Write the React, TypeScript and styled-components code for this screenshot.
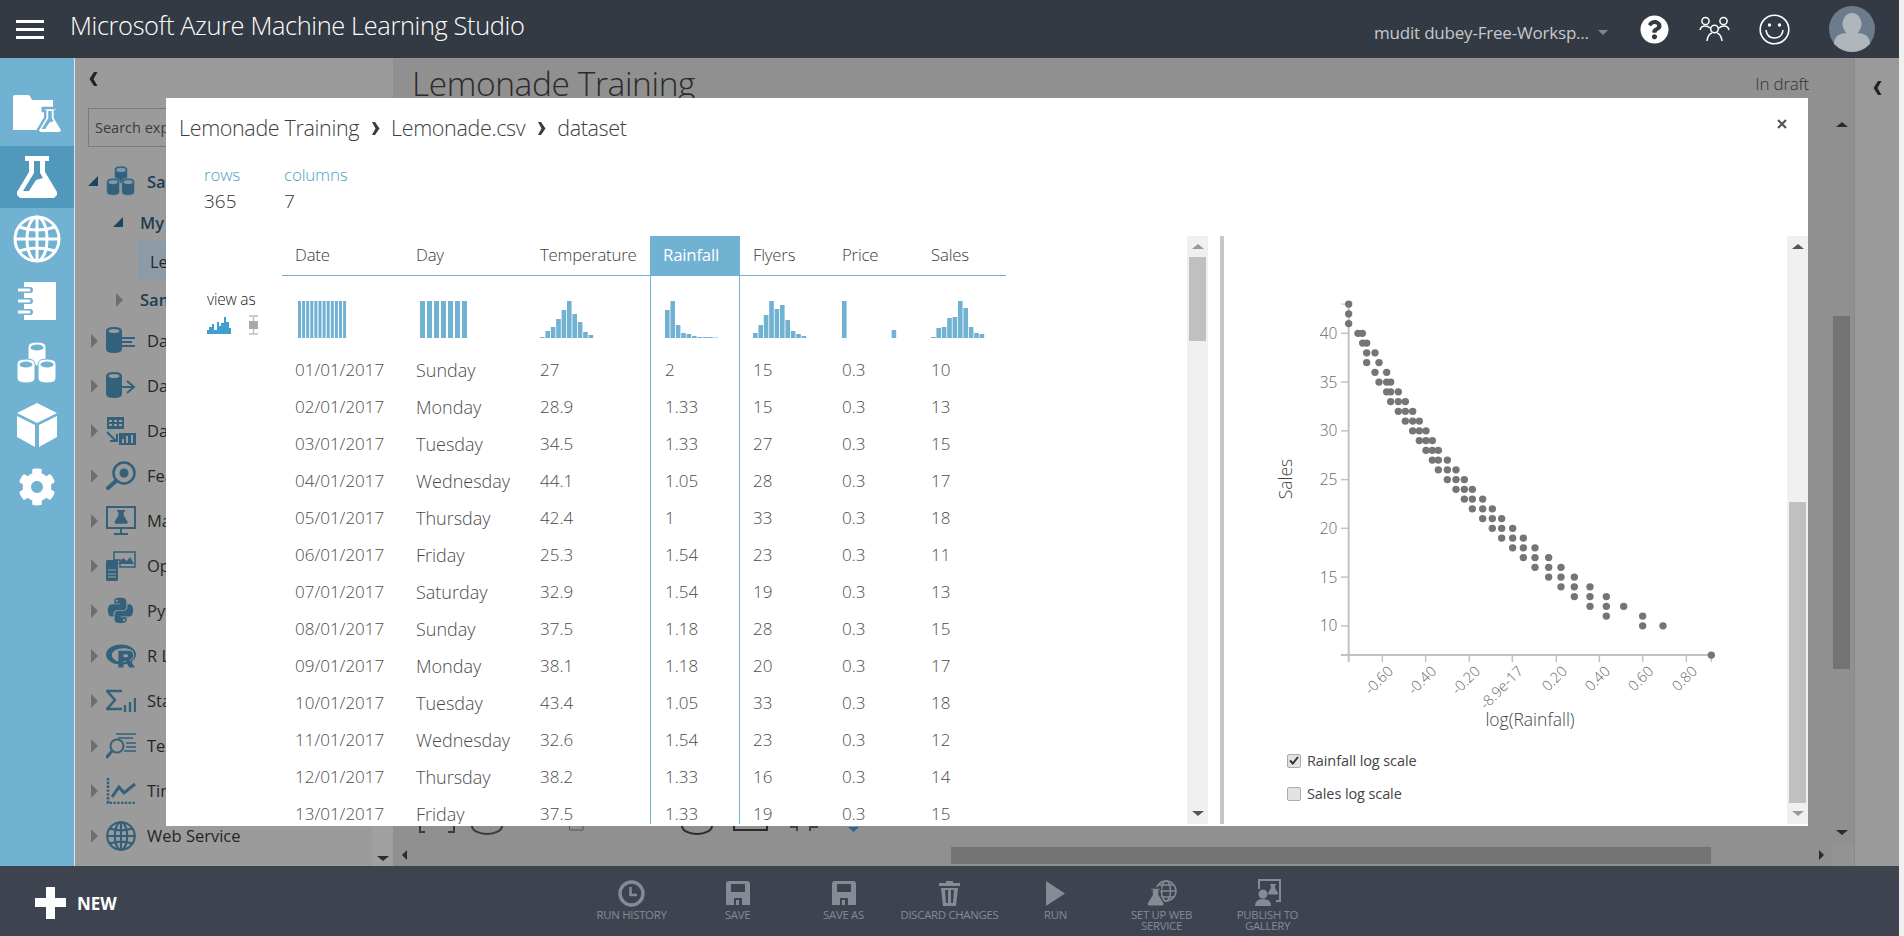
import React from 'react'
import styled, { createGlobalStyle } from 'styled-components'
import { FaCog, FaPython, FaRProject, FaQuestionCircle } from 'react-icons/fa'

// ******************** //
// COLOURS
// ******************** //

const BLUE = '#71b1d2'
const BLUE_DARK = '#5099bd'
const TEAL = '#33607a'
const BAR_TOP = '#343a43'
const BAR_BOTTOM = '#3d4450'
const ACTION = '#848b94'
const TEXT = '#4a4a4a'
const AXIS = '#c2c2c2'
const FONT = '"Open Sans", "Liberation Sans", sans-serif'

const GlobalStyle = createGlobalStyle`
  html, body {
    margin: 0;
    padding: 0;
    overflow: hidden;
    background: #f0f0f0;
  }
  * {
    box-sizing: border-box;
  }
`

// ******************** //
// PAGE FRAME
// ******************** //

const Root = styled.div`
  position: relative;
  width: 1899px;
  height: 936px;
  display: flex;
  flex-direction: column;
  font-family: ${FONT};
`

const TopBar = styled.header`
  height: 58px;
  flex: none;
  display: flex;
  align-items: center;
  background: ${BAR_TOP};
  color: #fff;
`

const Hamburger = styled.div`
  width: 28px;
  margin-left: 16px;
  display: flex;
  flex-direction: column;
  gap: 5px;

  span {
    display: block;
    height: 3px;
    background: #fff;
  }
`

const BrandTitle = styled.div`
  margin-left: 26px;
  font-size: 25.4px;
  font-weight: 300;
  letter-spacing: -0.37px;
  position: relative;
  top: -4px;
`

const TopRight = styled.div`
  margin-left: auto;
  display: flex;
  align-items: center;
`

const Workspace = styled.div`
  width: 250px;
  display: flex;
  align-items: center;
  color: #c6c8cb;
  font-size: 17px;
  letter-spacing: -0.2px;
  white-space: nowrap;
  position: relative;
  top: 3px;
`

const Caret = styled.span`
  margin-left: 9px;
  border-top: 5px solid #80858c;
  border-left: 5px solid transparent;
  border-right: 5px solid transparent;
`

const TopIcon = styled.div<{ $w: number }>`
  width: ${p => p.$w}px;
  display: flex;
  justify-content: center;
`

const Middle = styled.div`
  flex: 1;
  min-height: 0;
  display: flex;
`

// ******************** //
// LEFT RAIL
// ******************** //

const Rail = styled.nav`
  width: 75px;
  flex: none;
  padding-top: 26px;
  background: ${BLUE};
  border-right: 1px solid #d5e6ef;
`

const RailItem = styled.div<{ $active?: boolean }>`
  height: 62px;
  display: flex;
  align-items: center;
  justify-content: center;
  background: ${p => (p.$active ? BLUE_DARK : 'transparent')};
`

// ******************** //
// EXPERIMENT SIDEBAR
// ******************** //

const Sidebar = styled.aside`
  position: relative;
  width: 318px;
  flex: none;
  background: #9b9b9b;
  color: #262626;
`

const Collapse = styled.div`
  height: 42px;
  padding-left: 14px;
  display: flex;
  align-items: center;
`

const Chevron = styled.span`
  color: #222;
  font-size: 14px;
  font-weight: 700;
  display: inline-flex;
`

const SearchBox = styled.input`
  display: block;
  width: 290px;
  height: 39px;
  margin: 8px 0 12px 13px;
  padding: 0 6px;
  background: transparent;
  border: 1px solid #7c7c7c;
  font-family: ${FONT};
  font-size: 14.5px;

  &::placeholder {
    color: #3b3b3b;
    opacity: 1;
  }
`

const TreeRow = styled.div<{ $h: number; $indent?: number; $selected?: boolean }>`
  height: ${p => p.$h}px;
  margin-left: ${p => p.$indent || 0}px;
  display: flex;
  align-items: center;
  background: ${p => (p.$selected ? '#8c9ba6' : 'transparent')};
  white-space: nowrap;
`

const ArrowSlot = styled.span`
  width: 31px;
  padding-left: 13px;
  flex: none;
  display: flex;
`

const SubArrowSlot = styled(ArrowSlot)`
  width: 27px;
  padding-left: 0;
`

const TreeArrow = styled.span<{ $open?: boolean }>`
  width: 0;
  height: 0;
  ${p =>
    p.$open
      ? `border-bottom: 10px solid #1c4660; border-left: 10px solid transparent;`
      : `margin-left: 3px; border-left: 7px solid #6e6e6e; border-top: 7px solid transparent; border-bottom: 7px solid transparent;`}
`

const TreeIcon = styled.span`
  width: 41px;
  flex: none;
  display: flex;
`

const TreeLabel = styled.span<{ $bold?: boolean }>`
  font-size: 16.5px;
  font-weight: ${p => (p.$bold ? 600 : 400)};
  color: ${p => (p.$bold ? '#1b3d55' : '#262626')};
`

const SelectedLabel = styled(TreeLabel)`
  padding-left: 12px;
`

const SideScrollCorner = styled.div`
  position: absolute;
  right: 0;
  bottom: 0;
  width: 21px;
  height: 40px;
  padding-top: 30px;
  background: #a0a0a0;
  display: flex;
  justify-content: center;
`

const ArrowDown = styled.span<{ $color: string }>`
  display: block;
  width: 0;
  height: 0;
  border-top: 5px solid ${p => p.$color};
  border-left: 6px solid transparent;
  border-right: 6px solid transparent;
`

const ArrowUp = styled.span<{ $color: string }>`
  display: block;
  width: 0;
  height: 0;
  border-bottom: 5px solid ${p => p.$color};
  border-left: 6px solid transparent;
  border-right: 6px solid transparent;
`

// ******************** //
// CANVAS BEHIND THE DIALOG
// ******************** //

const Canvas = styled.main`
  position: relative;
  flex: 1;
  min-width: 0;
  background: #909090;
`

const CanvasHead = styled.div`
  height: 50px;
  padding: 0 45px 0 19px;
  display: flex;
  align-items: center;
  justify-content: space-between;
`

const ExperimentTitle = styled.div`
  font-size: 33.5px;
  font-weight: 300;
  letter-spacing: -0.4px;
  color: #2b2b2b;
`

const Draft = styled.div`
  font-size: 17px;
  font-weight: 300;
  letter-spacing: -0.2px;
  color: #333;
`

const Scraps = styled.svg`
  position: absolute;
  left: 20px;
  top: 768px;
`

const ThumbV = styled.div`
  position: absolute;
  left: 1440px;
  top: 258px;
  width: 17px;
  height: 353px;
  background: #737373;
`

const ThumbH = styled.div`
  position: absolute;
  left: 558px;
  top: 789px;
  width: 760px;
  height: 17px;
  background: #737373;
`

const CanvasArrowUp = styled.div`
  position: absolute;
  left: 1443px;
  top: 64px;
`

const CanvasArrowDown = styled.div`
  position: absolute;
  left: 1443px;
  top: 772px;
`

const CanvasArrowLeft = styled.span`
  position: absolute;
  left: 9px;
  top: 792px;
  border-right: 5px solid #2b2b2b;
  border-top: 5px solid transparent;
  border-bottom: 5px solid transparent;
`

const CanvasArrowRight = styled.span`
  position: absolute;
  left: 1426px;
  top: 792px;
  border-left: 5px solid #2b2b2b;
  border-top: 5px solid transparent;
  border-bottom: 5px solid transparent;
`

const CornerTile = styled.div`
  position: absolute;
  right: 0;
  bottom: 0;
  width: 22px;
  height: 21px;
  background: #939393;
`

const RightPanel = styled.div`
  width: 45px;
  flex: none;
  padding-top: 23px;
  background: #9a9a9a;
  border-left: 1px solid #8a8a8a;
  display: flex;
  justify-content: center;
  align-items: flex-start;
`

// ******************** //
// BOTTOM COMMAND BAR
// ******************** //

const BottomBar = styled.footer`
  position: relative;
  height: 70px;
  flex: none;
  background: ${BAR_BOTTOM};
  display: flex;
  justify-content: center;
`

const NewButton = styled.div`
  position: absolute;
  left: 35px;
  top: 21px;
  display: flex;
  align-items: center;
  gap: 11px;
  color: #fff;
  font-size: 17px;
  font-weight: 700;
`

const Action = styled.div`
  width: 106px;
  padding-top: 14px;
  display: flex;
  flex-direction: column;
  align-items: center;
`

const ActionIcon = styled.div`
  height: 26px;
  display: flex;
  align-items: center;
  justify-content: center;
`

const ActionLabel = styled.div`
  margin-top: 3px;
  color: ${ACTION};
  font-size: 11.4px;
  line-height: 11px;
  letter-spacing: -0.3px;
  text-align: center;
  white-space: pre-line;
`

// ******************** //
// DATASET DIALOG
// ******************** //

const Dialog = styled.section`
  position: absolute;
  left: 166px;
  top: 98px;
  width: 1642px;
  height: 728px;
  background: #fff;
  display: flex;
  flex-direction: column;
  overflow: hidden;
  color: ${TEXT};
`

const DialogHead = styled.div`
  position: relative;
  height: 138px;
  flex: none;
`

const Crumbs = styled.div`
  padding: 15px 0 0 13px;
  display: flex;
  align-items: center;
  gap: 11.5px;
  font-size: 21.5px;
  line-height: 30px;
  font-weight: 300;
  letter-spacing: -0.35px;
  color: #3e3e3e;
`

const CrumbSep = styled.span`
  display: inline-flex;
`

const CloseX = styled.div`
  position: absolute;
  right: 21px;
  top: 21px;
  display: flex;
`

const Stats = styled.div`
  margin-top: 20px;
  padding-left: 38px;
  display: flex;
`

const Stat = styled.div`
  width: 80px;
`

const StatLabel = styled.div`
  color: #4e9fc8;
  font-size: 17px;
  font-weight: 300;
  line-height: 24px;
  letter-spacing: -0.2px;
`

const StatValue = styled.div`
  color: #333;
  font-size: 19px;
  font-weight: 300;
  line-height: 28px;
`

const DialogBody = styled.div`
  flex: none;
  height: 588px;
  display: flex;
  overflow: hidden;
`

const ViewAs = styled.div`
  width: 116px;
  flex: none;
  padding: 53px 0 0 41px;
`

const ViewAsLabel = styled.div`
  font-size: 15.5px;
  line-height: 20px;
  letter-spacing: -0.2px;
  color: #222;
  font-weight: 300;
  white-space: nowrap;
`

const ViewAsIcons = styled.div`
  margin-top: 6px;
  width: 52px;
  display: flex;
  align-items: center;
  justify-content: space-between;
`

const DataTable = styled.div`
  width: 724px;
  flex: none;
  display: grid;
  grid-template-columns: 121px 124px 123px 90px 89px 89px 88px;
  grid-auto-rows: 37px;
  grid-template-rows: 40px 75px;
  font-size: 17px;
  font-weight: 300;
`

const HeadCell = styled.div<{ $active?: boolean }>`
  padding: 0 0 3px 13px;
  display: flex;
  align-items: center;
  font-weight: ${p => (p.$active ? 400 : 300)};
  font-size: 16.8px;
  letter-spacing: -0.2px;
  color: ${p => (p.$active ? '#fff' : '#3c3c3c')};
  background: ${p => (p.$active ? BLUE : 'transparent')};
  border-bottom: 1px solid ${BLUE};
`

const Cell = styled.div<{ $active?: boolean }>`
  display: flex;
  align-items: center;
  white-space: nowrap;
  padding-left: ${p => (p.$active ? 14 : 13)}px;
  ${p =>
    p.$active
      ? `border-left: 1px solid ${BLUE}; border-right: 1px solid ${BLUE};`
      : ''}
`

const HistCell = styled(Cell)`
  align-items: flex-start;
  padding-top: 25px;
`

const DayCell = styled(Cell)`
  font-size: 18px;
`

const ScrollTrack = styled.div<{ $left: number }>`
  width: 21px;
  flex: none;
  height: 588px;
  margin-left: ${p => p.$left}px;
  background: #f0f0f0;
  display: flex;
  flex-direction: column;
  align-items: center;
  padding: 0 2px;
`

const ScrollBtn = styled.div`
  height: 21px;
  flex: none;
  display: flex;
  align-items: center;
  justify-content: center;
`

const ScrollThumb = styled.div<{ $h: number }>`
  width: 17px;
  height: ${p => p.$h}px;
  flex: none;
  background: #c0c0c0;
`

const ScrollGap = styled.div`
  flex: 1;
`

const Divider = styled.div`
  width: 4px;
  height: 588px;
  flex: none;
  margin-left: 12px;
  background: #c6c6c6;
`

const ChartPanel = styled.div`
  width: 563px;
  flex: none;
`

const ChartSvg = styled.svg`
  display: block;
`

const ScaleOption = styled.label`
  height: 33px;
  padding-left: 63px;
  display: flex;
  align-items: center;
  gap: 6px;
  font-size: 14.5px;
  letter-spacing: -0.1px;
  color: #444;
`

const Tick = styled.span`
  width: 14px;
  height: 14px;
  flex: none;
  background: #e3e3e3;
  border: 1px solid #ababab;
  border-radius: 2px;
  display: flex;
  align-items: center;
  justify-content: center;
`

// ******************** //
// ICONS
// ******************** //

const FLASK = 'M8 0H32V5H28V16L40 36V39L37 42H3L0 39V36L12 16V5H8Z'

const FlaskIcon = ({ size = 42, fill = '#fff', cut = BLUE_DARK }: { size?: number; fill?: string; cut?: string }) => (
  <svg width={(size * 40) / 42} height={size} viewBox="0 0 40 42">
    <path d={FLASK} fill={fill} />
    <path d="M17 5H23V17L26 22L19 24L12 35H6L17 17Z" fill={cut} />
  </svg>
)

const FolderFlask = () => (
  <svg width="50" height="42" viewBox="0 0 50 42">
    <path d="M1 3Q1 1 3 1H16Q18 1 19 4L20 6H41V36H1Z" fill="#fff" />
    <g transform="translate(26 14) scale(0.6)">
      <path d={FLASK} fill="#fff" stroke={BLUE} strokeWidth="4" />
      <path d="M17 5H23V17L26 22L19 24L12 35H6L17 17Z" fill={BLUE} />
    </g>
  </svg>
)

const Globe = ({ size = 48, color = '#fff', w = 3 }: { size?: number; color?: string; w?: number }) => (
  <svg width={size} height={size} viewBox="0 0 48 48" fill="none" stroke={color} strokeWidth={w}>
    <circle cx="24" cy="24" r="22" />
    <ellipse cx="24" cy="24" rx="10" ry="22" />
    <path d="M24 2V46M2 24H46M6 12Q24 18 42 12M6 36Q24 30 42 36" />
  </svg>
)

const Notebook = () => (
  <svg width="38" height="38" viewBox="0 0 38 38">
    <rect x="6" y="0" width="32" height="38" fill="#fff" />
    <g stroke={BLUE} strokeWidth="6" strokeLinecap="round">
      <path d="M0 8H12M0 19H12M0 30H12" />
    </g>
    <g stroke="#fff" strokeWidth="3" strokeLinecap="round">
      <path d="M1 8H11M1 19H11M1 30H11" />
    </g>
  </svg>
)

const Can = ({ x, y, fill, top }: { x: number; y: number; fill: string; top: string }) => (
  <g transform={`translate(${x} ${y})`}>
    <path d="M0 5Q0 0 9 0T18 5V19Q18 24 9 24T0 19Z" fill={fill} stroke={top} strokeWidth="1" />
    <ellipse cx="9" cy="5.5" rx="6.5" ry="3" fill={top} />
  </g>
)

const Cans = ({ size = 42, fill = '#fff', top = BLUE }: { size?: number; fill?: string; top?: string }) => (
  <svg width={size} height={size} viewBox="0 0 42 42">
    <Can x={12} y={0} fill={fill} top={top} />
    <Can x={1} y={17} fill={fill} top={top} />
    <Can x={22} y={17} fill={fill} top={top} />
  </svg>
)

const Cube = () => (
  <svg width="40" height="44" viewBox="0 0 40 44" fill="#fff">
    <path d="M20 0L40 10L20 20L0 10Z" />
    <path d="M0 13L18 22V44L0 34Z" />
    <path d="M40 13L22 22V44L40 34Z" />
  </svg>
)

const TealCan = () => (
  <path d="M0 4Q0 0 8 0T16 4V22Q16 26 8 26T0 22Z" fill={TEAL} />
)

const IconFormat = () => (
  <svg width="30" height="28" viewBox="0 0 30 28">
    <TealCan />
    <ellipse cx="8" cy="4" rx="5.5" ry="2" fill="#9b9b9b" />
    <path d="M14 11H29M14 15H26M14 19H29" stroke={TEAL} strokeWidth="2" />
  </svg>
)

const IconInOut = () => (
  <svg width="30" height="28" viewBox="0 0 30 28">
    <TealCan />
    <ellipse cx="8" cy="4" rx="5.5" ry="2" fill="#9b9b9b" />
    <path d="M13 15H27M21 9L28 15L21 21" stroke={TEAL} strokeWidth="2" fill="none" />
  </svg>
)

const IconTransform = () => (
  <svg width="30" height="28" viewBox="0 0 30 28">
    <path d="M1 0H18V12H1Z" fill={TEAL} />
    <path d="M3 3H6V5H3ZM8 3H11V5H8ZM13 3H16V5H13ZM3 7H6V9H3ZM8 7H11V9H8ZM13 7H16V9H13Z" fill="#9b9b9b" />
    <path d="M1 15L10 24M4 24H11V17" stroke={TEAL} strokeWidth="2" fill="none" />
    <path d="M13 16H30V28H13Z" fill={TEAL} />
    <path d="M16 22H18V26H16ZM20 19H22V26H20ZM25 18H27V26H25Z" fill="#9b9b9b" />
  </svg>
)

const IconFeature = () => (
  <svg width="30" height="30" viewBox="0 0 30 30" fill="none">
    <circle cx="18" cy="12" r="10.5" stroke={TEAL} strokeWidth="2.5" />
    <circle cx="18" cy="12" r="4.5" fill={TEAL} />
    <path d="M10 20L2 27" stroke={TEAL} strokeWidth="4" strokeLinecap="round" />
  </svg>
)

const IconMachine = () => (
  <svg width="30" height="30" viewBox="0 0 30 30" fill="none">
    <rect x="1" y="1" width="28" height="21" stroke={TEAL} strokeWidth="2" />
    <path d="M15 22V27M8 28H22" stroke={TEAL} strokeWidth="2" />
    <g transform="translate(8.5 4) scale(0.33)">
      <path d={FLASK} fill={TEAL} />
    </g>
  </svg>
)

const IconOpen = () => (
  <svg width="30" height="30" viewBox="0 0 30 30">
    <path d="M8 1H29V16H14V9H8Z" fill="none" stroke={TEAL} strokeWidth="1.5" />
    <path d="M12 13L17 7L21 10L24 6L28 13Z" fill={TEAL} />
    <rect x="0" y="9" width="12" height="21" rx="1.5" fill={TEAL} />
    <path d="M2 19H10M2 23H10M2 26H10" stroke="#9b9b9b" strokeWidth="1.2" />
  </svg>
)

const IconStats = () => (
  <svg width="30" height="24" viewBox="0 0 30 24" fill="none" stroke={TEAL}>
    <path d="M16 2H1L9 11L1 20H16" strokeWidth="2.4" />
    <path d="M19 23V16M24 23V13M29 23V9" strokeWidth="2.4" />
  </svg>
)

const IconText = () => (
  <svg width="30" height="26" viewBox="0 0 30 26" fill="none" stroke={TEAL}>
    <circle cx="11" cy="13" r="6.5" strokeWidth="2" />
    <path d="M6 18L1 24" strokeWidth="3" strokeLinecap="round" />
    <path d="M10 1H30M12 5H27M20 10H30M20 14H30M18 18H30" strokeWidth="1.6" />
  </svg>
)

const IconTime = () => (
  <svg width="30" height="26" viewBox="0 0 30 26" fill="none" stroke={TEAL}>
    <path d="M2 0V25H30" strokeWidth="2.6" strokeDasharray="2.4 1.4" />
    <path d="M6 19L13 9L18 15L29 6" strokeWidth="3" />
  </svg>
)

const Floppy = () => (
  <svg width="24" height="24" viewBox="0 0 24 24">
    <path
      fillRule="evenodd"
      d="M3 0H21Q24 0 24 3V24H16V17H8V24H0V3Q0 0 3 0ZM5 3V11H19V3Z"
      fill={ACTION}
    />
    <rect x="10" y="19" width="3" height="5" fill={ACTION} />
  </svg>
)

const Clock = () => (
  <svg width="27" height="27" viewBox="0 0 27 27" fill="none" stroke={ACTION}>
    <circle cx="13.5" cy="13.5" r="11.5" strokeWidth="3.4" />
    <path d="M12.5 7V15H19" strokeWidth="2.6" />
  </svg>
)

const Trash = () => (
  <svg width="21" height="25" viewBox="0 0 21 25" fill={ACTION}>
    <path d="M7 0H14V2H21V5H0V2H7Z" />
    <path
      fillRule="evenodd"
      d="M2 7H19L17 25H4ZM6 9L7 22H9V9ZM12 9V22H14L15 9Z"
    />
  </svg>
)

const Play = () => (
  <svg width="19" height="25" viewBox="0 0 19 25">
    <path d="M0 0L19 12.5L0 25Z" fill={ACTION} />
  </svg>
)

const WebService = () => (
  <svg width="30" height="26" viewBox="0 0 30 26">
    <g fill="none" stroke={ACTION} strokeWidth="1.5">
      <circle cx="19" cy="11" r="10" />
      <ellipse cx="19" cy="11" rx="4.5" ry="10" />
      <path d="M9 11H29M11 5H27M11 17H27" />
    </g>
    <g transform="translate(0 8) scale(0.43)">
      <path d={FLASK} fill={ACTION} stroke={BAR_BOTTOM} strokeWidth="3" />
    </g>
  </svg>
)

const Publish = () => (
  <svg width="26" height="28" viewBox="0 0 26 28" fill={ACTION}>
    <path d="M3 0H26V23H21V21H24V2H5V10H3Z" />
    <g transform="translate(13 5) scale(0.25)">
      <path d={FLASK} />
    </g>
    <circle cx="8" cy="15" r="4.5" />
    <path d="M0 27Q0 20 8 20T16 27Z" />
  </svg>
)

const People = () => (
  <svg width="31" height="26" viewBox="0 0 31 26" fill="none" stroke="#fff" strokeWidth="1.5">
    <circle cx="6.5" cy="5" r="3.6" />
    <circle cx="24.5" cy="5" r="3.6" />
    <circle cx="15.5" cy="13" r="3.8" />
    <path d="M1 14Q2 10 6 10Q9 10 11 12M30 14Q29 10 25 10Q22 10 20 12M8 25Q9 18 13 17M23 25Q22 18 18 17" />
  </svg>
)

const Smile = () => (
  <svg width="31" height="31" viewBox="0 0 31 31" fill="none" stroke="#fff" strokeWidth="1.6">
    <circle cx="15.5" cy="15.5" r="14.3" />
    <path d="M7 16Q8 24 15.5 24T24 16" />
    <circle cx="10.5" cy="11" r="0.9" fill="#fff" />
    <circle cx="20.5" cy="11" r="0.9" fill="#fff" />
  </svg>
)

const Avatar = () => (
  <svg width="46" height="46" viewBox="0 0 46 46">
    <circle cx="23" cy="23" r="23" fill="#6d7c8c" />
    <ellipse cx="23" cy="18" rx="9.5" ry="11" fill="#aeb6bc" />
    <path d="M5 38Q5 28 17 27H29Q41 28 41 38Q33 46 23 46T5 38Z" fill="#aeb6bc" />
  </svg>
)

const CrumbChevron = () => (
  <svg width="9" height="13" viewBox="0 0 9 13">
    <path d="M1 0H4L8.5 6.5L4 13H1L4.5 6.5Z" fill="#3c3c3c" />
  </svg>
)

const BackChevron = () => (
  <svg width="9" height="14" viewBox="0 0 9 14">
    <path d="M8.5 0H5L0.5 7L5 14H8.5L4.5 7Z" fill="#222" />
  </svg>
)

const HistMode = () => (
  <svg width="24" height="17" viewBox="0 0 24 17">
    <path
      d="M0 17V13H2V10H5V7H7V13H10V5H12V9H14V6H17V0H19V5H22V11H24V17Z"
      fill="#3f9fcd"
    />
  </svg>
)

const BoxMode = () => (
  <svg width="11" height="20" viewBox="0 0 11 20">
    <path d="M1 1H10M1 19H10M5.5 1V19" stroke="#bdbdbd" strokeWidth="1.4" />
    <rect x="1" y="6" width="9" height="8" fill="#a9a9a9" />
  </svg>
)

// ******************** //
// DATA
// ******************** //

const COLUMNS = ['Date', 'Day', 'Temperature', 'Rainfall', 'Flyers', 'Price', 'Sales']

const ROWS = [
  ['01/01/2017', 'Sunday', '27', '2', '15', '0.3', '10'],
  ['02/01/2017', 'Monday', '28.9', '1.33', '15', '0.3', '13'],
  ['03/01/2017', 'Tuesday', '34.5', '1.33', '27', '0.3', '15'],
  ['04/01/2017', 'Wednesday', '44.1', '1.05', '28', '0.3', '17'],
  ['05/01/2017', 'Thursday', '42.4', '1', '33', '0.3', '18'],
  ['06/01/2017', 'Friday', '25.3', '1.54', '23', '0.3', '11'],
  ['07/01/2017', 'Saturday', '32.9', '1.54', '19', '0.3', '13'],
  ['08/01/2017', 'Sunday', '37.5', '1.18', '28', '0.3', '15'],
  ['09/01/2017', 'Monday', '38.1', '1.18', '20', '0.3', '17'],
  ['10/01/2017', 'Tuesday', '43.4', '1.05', '33', '0.3', '18'],
  ['11/01/2017', 'Wednesday', '32.6', '1.54', '23', '0.3', '12'],
  ['12/01/2017', 'Thursday', '38.2', '1.33', '16', '0.3', '14'],
  ['13/01/2017', 'Friday', '37.5', '1.33', '19', '0.3', '15']
]

// bar heights in px, 37 being the tallest
const HISTOGRAMS: { x: number; width: number; step: number; bars: number[] }[] = [
  { x: 3, width: 3, step: 4.1, bars: [37, 37, 37, 37, 37, 37, 37, 37, 37, 37, 37, 37] },
  { x: 4, width: 5, step: 7, bars: [37, 37, 37, 37, 37, 37, 37] },
  { x: 0, width: 4.6, step: 5.4, bars: [1, 7, 11, 19, 28, 37, 24, 16, 6, 3] },
  { x: 0, width: 4.6, step: 5.4, bars: [28, 37, 13, 5, 4, 2, 1, 1, 1, 0.5] },
  { x: 0, width: 4.6, step: 5.4, bars: [5, 13, 23, 37, 29, 33, 18, 7, 4, 2] },
  { x: 0, width: 4.6, step: 49.6, bars: [37, 8] },
  { x: 0, width: 4.6, step: 5.4, bars: [1, 10, 11, 20, 21, 37, 30, 11, 5, 4] }
]

// dot x positions by sales value, measured along the axis
const DOTS: [number, number[]][] = [
  [43, [266]], [42, [266]], [41, [266]],
  [40, [294, 307]], [39, [308, 320]], [38, [320, 345]], [37, [320, 357]], [36, [345, 380]],
  [35, [357, 380, 392]], [34, [380, 392, 415]], [33, [392, 415, 436]], [32, [415, 436, 458]],
  [31, [436, 458, 478]], [30, [458, 478, 498]], [29, [478, 498, 517]], [28, [498, 517, 535]],
  [27, [517, 535, 562]], [26, [535, 562, 588]], [25, [562, 588, 613]], [24, [588, 613, 637]],
  [23, [613, 637, 668]], [22, [637, 668, 697]], [21, [668, 697, 725]], [20, [697, 725, 758]],
  [19, [725, 758, 790]], [18, [758, 790, 825]], [17, [790, 825, 866]], [16, [825, 866, 903]],
  [15, [866, 903, 943]], [14, [903, 943, 990]], [13, [943, 990, 1039]], [12, [990, 1039, 1091]],
  [11, [1039, 1148]], [10, [1148, 1209]], [7, [1354]]
]

const X_TICKS: [number, string][] = [
  [367, '-0.60'], [497, '-0.40'], [628, '-0.20'], [757, '-8.9e-17'],
  [889, '0.20'], [1018, '0.40'], [1148, '0.60'], [1279, '0.80']
]

const toX = (v: number) => 36 + v / 3
const toY = (sales: number) => 44 + (160 + (40 - sales) * 29.25) / 3

const TREE = [
  { label: 'Data Format Conversions', icon: <IconFormat /> },
  { label: 'Data Input and Output', icon: <IconInOut /> },
  { label: 'Data Transformation', icon: <IconTransform /> },
  { label: 'Feature Selection', icon: <IconFeature /> },
  { label: 'Machine Learning', icon: <IconMachine /> },
  { label: 'OpenCV Library Modules', icon: <IconOpen /> },
  { label: 'Python Language Modules', icon: <FaPython size={29} color={TEAL} /> },
  { label: 'R Language Modules', icon: <FaRProject size={30} color={TEAL} /> },
  { label: 'Statistical Functions', icon: <IconStats /> },
  { label: 'Text Analytics', icon: <IconText /> },
  { label: 'Time Series', icon: <IconTime /> },
  { label: 'Web Service', icon: <Globe size={30} color={TEAL} w={3.4} /> }
]

const ACTIONS = [
  { label: 'RUN HISTORY', icon: <Clock /> },
  { label: 'SAVE', icon: <Floppy /> },
  { label: 'SAVE AS', icon: <Floppy /> },
  { label: 'DISCARD CHANGES', icon: <Trash /> },
  { label: 'RUN', icon: <Play /> },
  { label: 'SET UP WEB\nSERVICE', icon: <WebService /> },
  { label: 'PUBLISH TO\nGALLERY', icon: <Publish /> }
]

// ******************** //
// PARTS
// ******************** //

const Histogram = ({ x, width, step, bars }: { x: number; width: number; step: number; bars: number[] }) => (
  <svg width="56" height="38" viewBox="0 0 56 38">
    {bars.map((h, i) => (
      <rect key={i} x={x + i * step} y={37 - h} width={width} height={h} fill={BLUE} />
    ))}
  </svg>
)

const ScatterPlot = () => (
  <ChartSvg width="563" height="508" viewBox="0 0 563 508">
    <g stroke={AXIS} strokeWidth="2" fill="none">
      <path d={`M${toX(266)} ${toY(43)}V${toY(7) + 7}`} />
      <path d={`M${toX(243)} ${toY(7)}H${toX(1354)}`} />
      <path d={`M${toX(243)} ${toY(43)}H${toX(266)}`} strokeWidth="1" />
      {[40, 35, 30, 25, 20, 15, 10].map(v => (
        <path key={v} d={`M${toX(243)} ${toY(v)}H${toX(266)}`} strokeWidth="1.5" />
      ))}
      {X_TICKS.map(([x]) => (
        <path key={x} d={`M${toX(x)} ${toY(7)}V${toY(7) + 7}`} strokeWidth="1.5" />
      ))}
      <path d={`M${toX(1354)} ${toY(7)}V${toY(7) + 7}`} strokeWidth="1.5" />
    </g>
    <g fontFamily={FONT} fontSize="15.5" fontWeight="300" fill="#666" textAnchor="end">
      {[40, 35, 30, 25, 20, 15, 10].map(v => (
        <text key={v} x={toX(232)} y={toY(v) + 5.5}>{v}</text>
      ))}
      {X_TICKS.map(([x, label]) => (
        <text
          key={x}
          x={toX(x + 35)}
          y={toY(7) + 17}
          fontSize="14.5"
          transform={`rotate(-45 ${toX(x + 35)} ${toY(7) + 17})`}
        >
          {label}
        </text>
      ))}
    </g>
    <text
      x="0"
      y="0"
      transform="translate(68 243) rotate(-90)"
      fontFamily={FONT}
      fontSize="17.5"
      fontWeight="300"
      fill="#444"
      textAnchor="middle"
    >
      Sales
    </text>
    <text x="306" y="490" fontFamily={FONT} fontSize="17.5" fontWeight="300" fill="#444" textAnchor="middle">
      log(Rainfall)
    </text>
    <g fill="#757575">
      {DOTS.map(([sales, xs]) =>
        xs.map(x => <circle key={`${sales}-${x}`} cx={toX(x)} cy={toY(sales)} r="3.7" />)
      )}
    </g>
  </ChartSvg>
)

// ******************** //
// APP
// ******************** //

const App = () => (
  <>
    <GlobalStyle />
    <Root>
      <TopBar>
        <Hamburger>
          <span />
          <span />
          <span />
        </Hamburger>
        <BrandTitle>Microsoft Azure Machine Learning Studio</BrandTitle>
        <TopRight>
          <Workspace>
            mudit dubey-Free-Worksp...
            <Caret />
          </Workspace>
          <TopIcon $w={60}>
            <FaQuestionCircle size={29} color="#fff" />
          </TopIcon>
          <TopIcon $w={60}>
            <People />
          </TopIcon>
          <TopIcon $w={60}>
            <Smile />
          </TopIcon>
          <TopIcon $w={95}>
            <Avatar />
          </TopIcon>
        </TopRight>
      </TopBar>

      <Middle>
        <Rail>
          <RailItem><FolderFlask /></RailItem>
          <RailItem $active><FlaskIcon /></RailItem>
          <RailItem><Globe /></RailItem>
          <RailItem><Notebook /></RailItem>
          <RailItem><Cans /></RailItem>
          <RailItem><Cube /></RailItem>
          <RailItem><FaCog size={38} color="#fff" /></RailItem>
        </Rail>

        <Sidebar>
          <Collapse>
            <Chevron><BackChevron /></Chevron>
          </Collapse>
          <SearchBox placeholder="Search experiment items" />
          <TreeRow $h={44}>
            <ArrowSlot><TreeArrow $open /></ArrowSlot>
            <TreeIcon><Cans size={30} fill={TEAL} top="#7f99a8" /></TreeIcon>
            <TreeLabel $bold>Saved Datasets</TreeLabel>
          </TreeRow>
          <TreeRow $h={38} $indent={38}>
            <SubArrowSlot><TreeArrow $open /></SubArrowSlot>
            <TreeLabel $bold>My Datasets</TreeLabel>
          </TreeRow>
          <TreeRow $h={40} $indent={63} $selected>
            <SelectedLabel>Lemonade.csv</SelectedLabel>
          </TreeRow>
          <TreeRow $h={37} $indent={38}>
            <SubArrowSlot><TreeArrow /></SubArrowSlot>
            <TreeLabel $bold>Samples</TreeLabel>
          </TreeRow>
          {TREE.map(item => (
            <TreeRow $h={45} key={item.label}>
              <ArrowSlot><TreeArrow /></ArrowSlot>
              <TreeIcon>{item.icon}</TreeIcon>
              <TreeLabel>{item.label}</TreeLabel>
            </TreeRow>
          ))}
          <SideScrollCorner>
            <ArrowDown $color="#2b2b2b" />
          </SideScrollCorner>
        </Sidebar>

        <Canvas>
          <CanvasHead>
            <ExperimentTitle>Lemonade Training</ExperimentTitle>
            <Draft>In draft</Draft>
          </CanvasHead>
          <Scraps width="460" height="10" viewBox="0 0 460 10" fill="none">
            <path d="M7 0V6H12M35 6H41V0" stroke="#3a3a3a" strokeWidth="2" />
            <path d="M59 0A15 8 0 0 0 89 0" stroke="#3a3a3a" strokeWidth="2" />
            <path d="M156.500 0V4H170V0" stroke="#5c5550" strokeWidth="1" />
            <path d="M269 0A15 8 0 0 0 299 0" stroke="#2b2b2b" strokeWidth="2" />
            <path d="M321 0V4H354V0" stroke="#2b2b2b" strokeWidth="2" />
            <path d="M377 1H384V5M397 5V1H405" stroke="#2b2b2b" strokeWidth="1.5" />
            <path d="M435 1H446L440.500 6Z" fill="#2a6a90" />
          </Scraps>
          <ThumbV />
          <ThumbH />
          <CanvasArrowUp><ArrowUp $color="#2b2b2b" /></CanvasArrowUp>
          <CanvasArrowDown><ArrowDown $color="#2b2b2b" /></CanvasArrowDown>
          <CanvasArrowLeft />
          <CanvasArrowRight />
          <CornerTile />
        </Canvas>

        <RightPanel>
          <Chevron><BackChevron /></Chevron>
        </RightPanel>
      </Middle>

      <BottomBar>
        <NewButton>
          <svg width="31" height="32" viewBox="0 0 31 32">
            <path d="M11 0H20V11H31V20H20V32H11V20H0V11H11Z" fill="#fff" />
          </svg>
          NEW
        </NewButton>
        {ACTIONS.map(a => (
          <Action key={a.label}>
            <ActionIcon>{a.icon}</ActionIcon>
            <ActionLabel>{a.label}</ActionLabel>
          </Action>
        ))}
      </BottomBar>

      <Dialog>
        <DialogHead>
          <Crumbs>
            Lemonade Training
            <CrumbSep><CrumbChevron /></CrumbSep>
            Lemonade.csv
            <CrumbSep><CrumbChevron /></CrumbSep>
            dataset
          </Crumbs>
          <CloseX>
            <svg width="10" height="10" viewBox="0 0 10 10">
              <path d="M1 1L9 9M9 1L1 9" stroke="#555" strokeWidth="2.2" />
            </svg>
          </CloseX>
          <Stats>
            <Stat>
              <StatLabel>rows</StatLabel>
              <StatValue>365</StatValue>
            </Stat>
            <Stat>
              <StatLabel>columns</StatLabel>
              <StatValue>7</StatValue>
            </Stat>
          </Stats>
        </DialogHead>

        <DialogBody>
          <ViewAs>
            <ViewAsLabel>view as</ViewAsLabel>
            <ViewAsIcons>
              <HistMode />
              <BoxMode />
            </ViewAsIcons>
          </ViewAs>

          <DataTable>
            {COLUMNS.map(c => (
              <HeadCell key={c} $active={c === 'Rainfall'}>
                {c}
              </HeadCell>
            ))}
            {HISTOGRAMS.map((h, i) => (
              <HistCell key={i} $active={i === 3}>
                <Histogram {...h} />
              </HistCell>
            ))}
            {ROWS.map(row =>
              row.map((value, i) =>
                i === 1 ? (
                  <DayCell key={`${row[0]}-${i}`}>{value}</DayCell>
                ) : (
                  <Cell key={`${row[0]}-${i}`} $active={i === 3}>{value}</Cell>
                )
              )
            )}
          </DataTable>

          <ScrollTrack $left={181}>
            <ScrollBtn><ArrowUp $color="#9a9a9a" /></ScrollBtn>
            <ScrollThumb $h={84} />
            <ScrollGap />
            <ScrollBtn><ArrowDown $color="#555" /></ScrollBtn>
          </ScrollTrack>
          <Divider />

          <ChartPanel>
            <ScatterPlot />
            <ScaleOption>
              <Tick>
                <svg width="10" height="9" viewBox="0 0 10 9">
                  <path d="M1 4.5L3.8 7.500L9 1" stroke="#333" strokeWidth="2" fill="none" />
                </svg>
              </Tick>
              Rainfall log scale
            </ScaleOption>
            <ScaleOption>
              <Tick />
              Sales log scale
            </ScaleOption>
          </ChartPanel>

          <ScrollTrack $left={0}>
            <ScrollBtn><ArrowUp $color="#555" /></ScrollBtn>
            <ScrollGap />
            <ScrollThumb $h={301} />
            <ScrollBtn><ArrowDown $color="#9a9a9a" /></ScrollBtn>
          </ScrollTrack>
        </DialogBody>
      </Dialog>
    </Root>
  </>
)

export default App
